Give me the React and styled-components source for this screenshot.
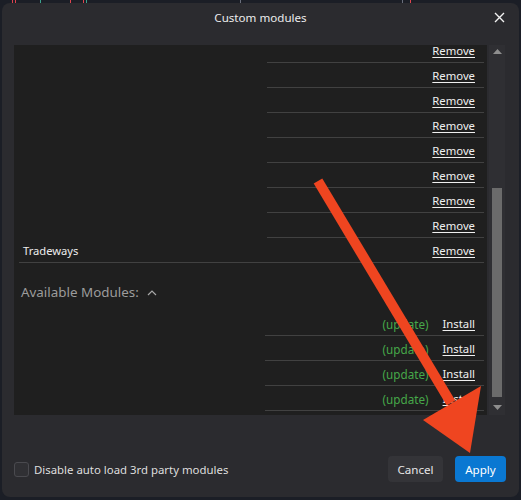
import React from "react";
import styled, { createGlobalStyle } from "styled-components";

const Global = createGlobalStyle`
  html, body { margin: 0; padding: 0; background: #1b1e26; }
  body { font-family: "Noto Sans", "Open Sans", "Liberation Sans", sans-serif; }
  * { box-sizing: border-box; }
`;

const Page = styled.div`
  position: relative;
  width: 521px;
  height: 500px;
  overflow: hidden;
`;

const ChartStrip = styled.div`
  position: absolute;
  top: 0;
  left: 0;
  right: 0;
  height: 3px;
`;

const Tick = styled.span`
  position: absolute;
  top: 0;
  width: 1px;
  height: 3px;
  background: ${(p) => p.$color};
`;

const Dialog = styled.div`
  position: relative;
  margin: 3px 2px 0 2px;
  height: 494px;
  background: #2b2b2f;
  border-radius: 8px;
  display: flex;
  flex-direction: column;
`;

const Header = styled.div`
  position: relative;
  height: 42px;
  padding-top: 5px;
  text-align: center;
`;

const Title = styled.div`
  color: #ececec;
  font-size: 11.6px;
  line-height: 20px;
`;

const CloseButton = styled.button`
  position: absolute;
  top: 6px;
  right: 12px;
  width: 16px;
  height: 16px;
  padding: 0;
  border: 0;
  background: transparent;
  display: flex;
  align-items: center;
  justify-content: center;
`;

const Body = styled.div`
  display: flex;
  gap: 2px;
  padding: 0 14px 0 12px;
  height: 370px;
`;

const ListPanel = styled.div`
  flex: 1;
  background: #1f1f1f;
  overflow: hidden;
  padding: 0 3px 0 5px;
`;

const ListInner = styled.div`
  margin-top: -7px;
`;

const Row = styled.div`
  position: relative;
  height: 25px;
  display: flex;
  align-items: center;
  justify-content: space-between;
  padding: 0 9px 0 4px;
  &::after {
    content: "";
    position: absolute;
    left: ${(p) => p.$lineFrom}px;
    right: 0;
    bottom: 0;
    height: 1px;
    background: #414141;
  }
`;

const Name = styled.span`
  color: #ededed;
  font-size: 11.2px;
`;

const Actions = styled.span`
  display: flex;
  gap: 14px;
  align-items: center;
`;

const Status = styled.span`
  color: #46a849;
  font-size: 11.7px;
`;

const LinkAction = styled.a`
  color: #f0f0f0;
  text-decoration: underline;
  text-underline-offset: 2px;
  font-size: 11.3px;
  cursor: pointer;
`;

const SectionHeader = styled.div`
  height: 48px;
  display: flex;
  align-items: center;
  gap: 8px;
  padding: 10px 0 0 2px;
  color: #9c9c9c;
  font-size: 13.4px;
`;

const Scrollbar = styled.div`
  width: 16px;
  background: #2f2f33;
  display: flex;
  flex-direction: column;
  align-items: center;
`;

const ScrollArrow = styled.div`
  height: 12px;
  display: flex;
  align-items: center;
  justify-content: center;
  margin-top: ${(p) => (p.$down ? "auto" : "0")};
  margin-bottom: ${(p) => (p.$down ? "2px" : "0")};
`;

const ScrollThumb = styled.div`
  width: 10px;
  height: 209px;
  margin-top: 131px;
  background: #6b6b6b;
`;

const Footer = styled.div`
  flex: 1;
  display: flex;
  align-items: flex-end;
  justify-content: space-between;
  padding: 0 13px 15px 12px;
`;

const CheckLabel = styled.label`
  display: flex;
  align-items: center;
  gap: 5px;
  height: 26px;
  color: #dedede;
  font-size: 11.4px;
`;

const CheckBox = styled.span`
  width: 15px;
  height: 15px;
  border: 1px solid #4a4a4f;
  border-radius: 3px;
  background: #303034;
`;

const Buttons = styled.div`
  display: flex;
  gap: 12px;
`;

const Button = styled.button`
  width: ${(p) => p.$width}px;
  height: 26px;
  padding: 0;
  border: 0;
  border-radius: 4px;
  font-family: inherit;
  font-size: 11.6px;
  color: ${(p) => (p.$primary ? "#ffffff" : "#e6e6e6")};
  background: ${(p) => (p.$primary ? "#0a78d2" : "#343438")};
`;

const Overlay = styled.svg`
  position: absolute;
  inset: 0;
  pointer-events: none;
`;

const removeRows = [
  { name: "", masked: true },
  { name: "", masked: true },
  { name: "", masked: true },
  { name: "", masked: true },
  { name: "", masked: true },
  { name: "", masked: true },
  { name: "", masked: true },
  { name: "", masked: true },
  { name: "Tradeways", masked: false },
];

const installRows = [0, 1, 2, 3];

const ticks = [
  ["#e0444e", 12], ["#e0444e", 15], ["#3aa38e", 40], ["#e0444e", 70], ["#e0444e", 83],
  ["#3aa38e", 86], ["#6a6f7c", 240], ["#6a6f7c", 402], ["#e0444e", 410],
];

export default function App() {
  return (
    <Page>
      <Global />
      <ChartStrip>
        {ticks.map(([c, x], i) => (
          <Tick key={i} $color={c} style={{ left: x }} />
        ))}
      </ChartStrip>
      <Dialog>
        <Header>
          <Title>Custom modules</Title>
          <CloseButton aria-label="Close">
            <svg width="11" height="11" viewBox="0 0 11 11">
              <path d="M1 1L10 10M10 1L1 10" stroke="#f2f2f2" strokeWidth="1.4" />
            </svg>
          </CloseButton>
        </Header>
        <Body>
          <ListPanel>
            <ListInner>
              {removeRows.map((r, i) => (
                <Row key={i} $lineFrom={r.masked ? 248 : 0}>
                  <Name>{r.name}</Name>
                  <LinkAction>Remove</LinkAction>
                </Row>
              ))}
              <SectionHeader>
                <span>Available Modules:</span>
                <svg width="10" height="7" viewBox="0 0 10 7">
                  <path d="M1 6L5 2L9 6" fill="none" stroke="#a8a8a8" strokeWidth="1.2" />
                </svg>
              </SectionHeader>
              {installRows.map((i) => (
                <Row key={i} $lineFrom={246}>
                  <Name />
                  <Actions>
                    <Status>(update)</Status>
                    <LinkAction>Install</LinkAction>
                  </Actions>
                </Row>
              ))}
            </ListInner>
          </ListPanel>
          <Scrollbar>
            <ScrollArrow>
              <svg width="9" height="5" viewBox="0 0 9 5">
                <path d="M0 5L4.5 0L9 5Z" fill="#8e8e8e" />
              </svg>
            </ScrollArrow>
            <ScrollThumb />
            <ScrollArrow $down>
              <svg width="9" height="5" viewBox="0 0 9 5">
                <path d="M0 0L4.5 5L9 0Z" fill="#8e8e8e" />
              </svg>
            </ScrollArrow>
          </Scrollbar>
        </Body>
        <Footer>
          <CheckLabel>
            <CheckBox />
            Disable auto load 3rd party modules
          </CheckLabel>
          <Buttons>
            <Button $width={55}>Cancel</Button>
            <Button $primary $width={51}>Apply</Button>
          </Buttons>
        </Footer>
      </Dialog>
      <Overlay width="521" height="500" viewBox="0 0 521 500">
        <path d="M318 181L451 403" stroke="#ef4520" strokeWidth="10" fill="none" />
        <path d="M423 420L481 386L470 453Z" fill="#ef4520" />
      </Overlay>
    </Page>
  );
}
